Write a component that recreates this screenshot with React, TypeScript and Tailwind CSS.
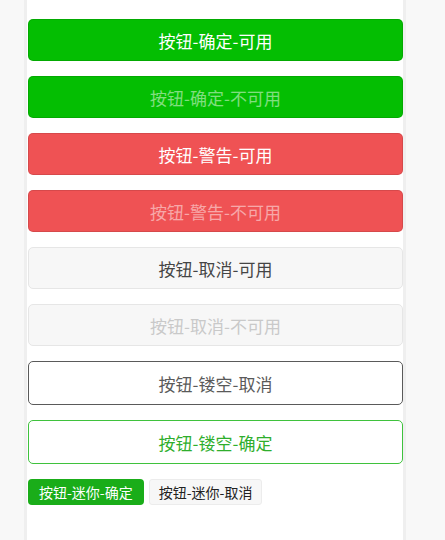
import React from "react";

const base =
  "block w-[375px] rounded-[5px] text-center text-[17px] leading-[42px] h-[42px]";

export default function App() {
  return (
    <div
      className="min-h-[540px] bg-[#f8f8f8]"
      style={{ fontFamily: '"Noto Sans CJK SC", "Noto Sans", sans-serif' }}
    >
      <div className="ml-[24px] w-[382px] min-h-[540px] border-x-[3px] border-[#efefef] bg-white pl-px pt-[19px]">
        <div className="flex flex-col gap-[15px]">
          <button className={`${base} bg-[#04be02] text-white border border-black/10 leading-[39px]`}>按钮-确定-可用</button>
          <button className={`${base} bg-[#04be02] text-white/50 border border-black/10 leading-[39px]`}>按钮-确定-不可用</button>
          <button className={`${base} bg-[#ef5254] text-white border border-black/10 leading-[39px]`}>按钮-警告-可用</button>
          <button className={`${base} bg-[#ef5254] text-white/50 border border-black/10 leading-[39px]`}>按钮-警告-不可用</button>
          <button className={`${base} bg-[#f7f7f7] text-[#454545] border border-[#e6e6e6] leading-[39px]`}>按钮-取消-可用</button>
          <button className={`${base} bg-[#f7f7f7] text-[#c9c9c9] border border-[#e6e6e6] leading-[39px]`}>按钮-取消-不可用</button>
          <button className="block w-[375px] h-[44px] rounded-[5px] border border-[#5a5a5a] bg-white text-center text-[17px] leading-[41px] text-[#5a5a5a]">按钮-镂空-取消</button>
          <button className="block w-[375px] h-[44px] rounded-[5px] border border-[#3fc23d] bg-white text-center text-[17px] leading-[41px] text-[#2fae2d]">按钮-镂空-确定</button>
          <div className="flex gap-[5px]">
            <button className="h-[26px] rounded-[4px] bg-[#1aad19] px-[11px] text-[14px] leading-[26px] text-white">按钮-迷你-确定</button>
            <button className="h-[26px] rounded-[3px] border border-[#ececec] bg-[#f7f7f7] px-[9px] text-[14px] leading-[24px] text-[#222]">按钮-迷你-取消</button>
          </div>
        </div>
      </div>
    </div>
  );
}
